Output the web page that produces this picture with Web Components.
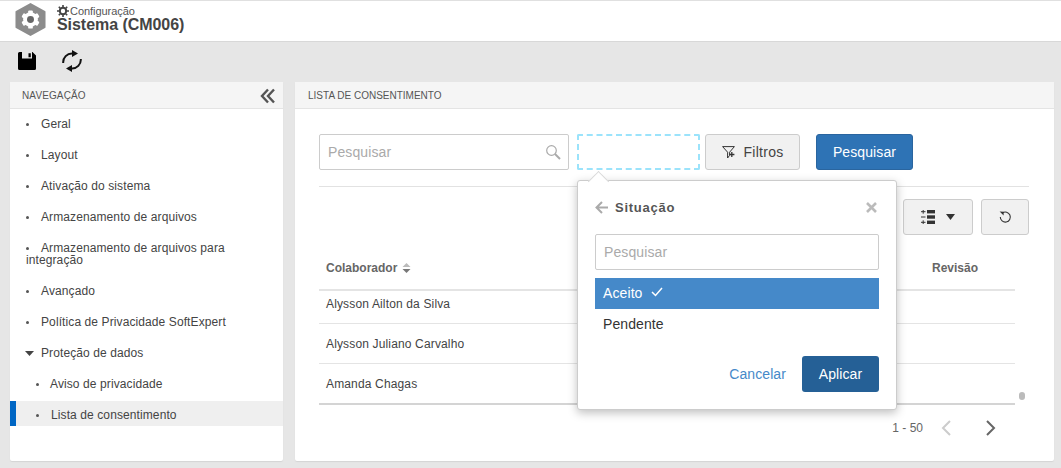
<!DOCTYPE html>
<html lang="pt">
<head>
<meta charset="utf-8">
<title>Sistema (CM006)</title>
<style>
  html, body { margin: 0; height: 100%; }
  body {
    background: #e6e6e6;
    font-family: "Liberation Sans", Arial, sans-serif;
    color: #444;
    overflow: hidden;
  }
  #work { display: flex; gap: 12px; padding: 0 7px 0 10px; height: 379px; }
</style>
</head>
<body>
<app-header></app-header>
<app-toolbar></app-toolbar>
<div id="work">
  <side-nav>
    <nav-item>Geral</nav-item>
    <nav-item>Layout</nav-item>
    <nav-item>Ativação do sistema</nav-item>
    <nav-item>Armazenamento de arquivos</nav-item>
    <nav-item wrap>Armazenamento de arquivos para integração</nav-item>
    <nav-item>Avançado</nav-item>
    <nav-item>Política de Privacidade SoftExpert</nav-item>
    <nav-item open>Proteção de dados</nav-item>
    <nav-item sub>Aviso de privacidade</nav-item>
    <nav-item sub active>Lista de consentimento</nav-item>
  </side-nav>
  <consent-list>
    <consent-row slot="rows">Alysson Ailton da Silva</consent-row>
    <consent-row slot="rows">Alysson Juliano Carvalho</consent-row>
    <consent-row slot="rows" last>Amanda Chagas</consent-row>
    <filter-popup slot="popup"></filter-popup>
  </consent-list>
</div>

<script>
const FONT = '"Liberation Sans", Arial, sans-serif';

class AppHeader extends HTMLElement {
  constructor() {
    super();
    this.attachShadow({mode:'open'}).innerHTML = `
      <style>
        :host { display: flex; align-items: flex-start; height: 40px; background: #fff; border-top: 1px solid #e0e0e0; border-bottom: 1px solid #d8d8d8; font-family: ${FONT}; }
        .logo { margin: 2px 0 0 15px; width: 31px; height: 33px; flex: none; }
        .txt { margin: 4px 0 0 11px; display: flex; flex-direction: column; }
        .crumb { display: flex; align-items: center; gap: 1px; font-size: 11px; line-height: 11px; color: #555; height: 11px; letter-spacing: -.05px; margin-top: 1px; }
        .crumb svg { margin-top: -1px; }
        .title { font-size: 16px; line-height: 18px; font-weight: bold; color: #444; letter-spacing: -.05px; margin-top: -1px; }
      </style>
      <svg class="logo" viewBox="0 0 32 34">
        <path d="M16 1 L30.5 9 V25 L16 33 L1.5 25 V9 Z" fill="#8c8c8c" stroke="#8c8c8c" stroke-linejoin="round" stroke-width="2"/>
        <g fill="#fff">
          <circle cx="16" cy="17" r="7.6"/>
          <rect x="13.6" y="7.6" width="4.8" height="18.8" rx="1"/>
          <rect x="13.6" y="7.6" width="4.8" height="18.8" rx="1" transform="rotate(60 16 17)"/>
          <rect x="13.6" y="7.6" width="4.8" height="18.8" rx="1" transform="rotate(120 16 17)"/>
        </g>
        <circle cx="16" cy="17" r="3.6" fill="#666"/>
      </svg>
      <div class="txt">
        <div class="crumb">
          <svg width="12" height="12" viewBox="0 0 12 12"><circle cx="6" cy="6" r="3.2" fill="none" stroke="#444" stroke-width="2"/><path d="M6 0v12M0 6h12M1.8 1.8l8.4 8.4M10.2 1.8l-8.4 8.4" stroke="#444" stroke-width="1.6" stroke-dasharray="2.2 7.6 2.2 0"/></svg>
          <span>Configuração</span>
        </div>
        <div class="title">Sistema (CM006)</div>
      </div>`;
  }
}

class AppToolbar extends HTMLElement {
  constructor() {
    super();
    this.attachShadow({mode:'open'}).innerHTML = `
      <style>
        :host { display: flex; align-items: center; height: 40px; padding: 0 0 2px 18px; gap: 26px; box-sizing: border-box; }
        svg { display: block; flex: none; }
      </style>
      <svg width="18" height="18" viewBox="0 0 18 18"><path fill-rule="evenodd" d="M1.5 0H14.5L18 3.5V16.5A1.5 1.5 0 0 1 16.5 18H1.5A1.5 1.5 0 0 1 0 16.5V1.5A1.5 1.5 0 0 1 1.5 0ZM4 0V6.5H14V0ZM10.5 1.2H12.8V5.2H10.5Z" fill="#000"/></svg>
      <svg width="20" height="22" viewBox="0 0 20 22" fill="none" stroke="#111" stroke-width="2"><path d="M1.2 13A8.8 8.8 0 0 1 10.5 3.5"/><path d="M18.8 9A8.8 8.8 0 0 1 9.5 18.5"/><path d="M10 0L16 3.5L10 7Z" fill="#111" stroke="none"/><path d="M10 15L4 18.5L10 22Z" fill="#111" stroke="none"/></svg>`;
  }
}

class SideNav extends HTMLElement {
  constructor() {
    super();
    this.attachShadow({mode:'open'}).innerHTML = `
      <style>
        :host { display: flex; flex-direction: column; width: 273px; flex: none; background: #fff; border-radius: 2px; box-shadow: 0 1px 1px #d4d4d4; font-family: ${FONT}; }
        .head { display: flex; align-items: center; justify-content: space-between; height: 27px; box-sizing: border-box; padding: 1px 8px 0 12px; background: #f5f5f5; border-bottom: 1px solid #e4e4e4; font-size: 10px; letter-spacing: .12px; color: #555; flex: none; }
        .list { display: flex; flex-direction: column; padding-top: 1px; }
      </style>
      <div class="head"><span>NAVEGAÇÃO</span>
        <svg width="15" height="16" viewBox="0 0 15 16" fill="none" stroke="#555" stroke-width="2.4"><path d="M8 1.5L2 8l6 6.5M14 1.5L8 8l6 6.5"/></svg>
      </div>
      <div class="list"><slot></slot></div>`;
  }
}

class NavItem extends HTMLElement {
  constructor() {
    super();
    const open = this.hasAttribute('open');
    const mark = open
      ? '<svg class="mk" width="9" height="5" viewBox="0 0 9 5"><path d="M0 0h9L4.5 5z" fill="#444"/></svg>'
      : '<i class="dot"></i>';
    this.attachShadow({mode:'open'}).innerHTML = `
      <style>
        :host { display: block; box-sizing: border-box; height: 31px; font-size: 12px; line-height: 12px; color: #444; letter-spacing: .1px; padding: 8px 8px 0 16px; position: relative; }
        :host([wrap]) { height: 43px; }
        :host([sub]) { padding-left: 26px; }
        :host([active]) { height: 25px; padding-top: 8px; background: #efefef; border-left: 6px solid #0066c4; padding-left: 20px; }
        .dot { display: inline-block; width: 3px; height: 3px; background: #555; border-radius: 50%; vertical-align: 2px; margin-right: 12px; }
        :host([sub]) .dot { margin-right: 11px; }
        :host([active]) .dot { margin-right: 12px; }
        .mk { margin: 0 7px 1px -1px; }
      </style>
      ${mark}<slot></slot>`;
  }
}

class ConsentRow extends HTMLElement {
  constructor() {
    super();
    this.attachShadow({mode:'open'}).innerHTML = `
      <style>
        :host { display: flex; align-items: center; box-sizing: border-box; height: 40px; padding: 0 0 0 7px; border-bottom: 1px solid #e4e4e4; font-size: 12px; color: #444; letter-spacing: .15px; }
        :host(:first-of-type) { height: 33px; align-items: flex-start; padding-top: 6px; }
        :host([last]) { border-bottom: 2px solid #d4d4d4; height: 41px; }
      </style>
      <slot></slot>`;
  }
}

class ConsentList extends HTMLElement {
  constructor() {
    super();
    this.attachShadow({mode:'open'}).innerHTML = `
      <style>
        :host { display: flex; flex-direction: column; flex: 1; min-width: 0; background: #fff; border-radius: 2px; box-shadow: 0 1px 1px #d4d4d4; font-family: ${FONT}; position: relative; }
        .head { height: 27px; flex: none; box-sizing: border-box; display: flex; align-items: center; padding: 1px 0 0 13px; background: #f5f5f5; border-bottom: 1px solid #e4e4e4; font-size: 10px; color: #555; }
        .body { padding: 25px 25px 0 24px; }
        .search { display: flex; height: 36px; padding-bottom: 16px; border-bottom: 1px solid #e2e2e2; }
        .inp { box-sizing: border-box; width: 250px; height: 36px; border: 1px solid #ccc; border-radius: 2px; display: flex; align-items: center; justify-content: space-between; padding: 0 7px 0 8px; font-size: 14px; color: #aaa; letter-spacing: .1px; }
        .dash { box-sizing: border-box; width: 123px; height: 36px; margin-left: 8px; border: 2px dashed #9be3fb; border-radius: 2px; }
        .btn { box-sizing: border-box; height: 36px; display: flex; align-items: center; justify-content: center; border: 1px solid #ccc; border-radius: 3px; background: #f1f1f1; color: #444; font-size: 14px; letter-spacing: .3px; }
        .filt { width: 95px; margin-left: 5px; gap: 8px; padding-left: 1px; }
        .go { width: 97px; margin-left: 16px; background: #2e73b5; border-color: #2a659f; color: #fff; letter-spacing: .1px; }
        .tools { display: flex; justify-content: flex-end; gap: 8px; margin-top: 12px; }
        .cfg { width: 70px; gap: 11px; }
        .ref { width: 48px; }
        .table { width: 696px; margin-top: 20px; }
        .th { display: flex; height: 36px; box-sizing: border-box; border-bottom: 2px solid #e4e4e4; font-size: 12px; font-weight: bold; color: #666; padding: 6px 0 0 7px; line-height: 14px; }
        .th .col { display: flex; gap: 5px; }
        .th .rev { margin-left: auto; margin-right: 37px; }
        .th svg { margin-top: 2px; }
        .foot { display: flex; align-items: center; justify-content: flex-end; height: 46px; font-size: 12px; color: #666; }
        .foot svg { display: block; }
        .dotbar { position: absolute; left: 724px; top: 310px; width: 6px; height: 8px; border-radius: 3px; background: #bbb; }
      </style>
      <div class="head">LISTA DE CONSENTIMENTO</div>
      <div class="body">
        <div class="search">
          <div class="inp"><span>Pesquisar</span>
            <svg width="16" height="16" viewBox="0 0 16 16" fill="none" stroke="#aaa"><circle cx="6.5" cy="6.5" r="4.8" stroke-width="1.2"/><path d="M10 10l5 5" stroke-width="2"/></svg>
          </div>
          <div class="dash"></div>
          <div class="btn filt">
            <svg width="13" height="13" viewBox="0 0 13 13" fill="none" stroke="#333"><path d="M.6.6h11.8L7.6 6.2V9.4L5.6 12V6.2Z" stroke-width="1"/><path d="M9.8 6v5M7.4 8.5h5" stroke-width="1.3"/></svg>
            <span>Filtros</span>
          </div>
          <div class="btn go">Pesquisar</div>
        </div>
        <div class="tools">
          <div class="btn cfg">
            <svg width="14" height="14" viewBox="0 0 14 14" fill="#333"><rect x="6" y="0" width="8" height="3.4"/><rect x="6" y="5.3" width="8" height="3.4"/><rect x="6" y="10.6" width="8" height="3.4"/><path d="M0 1.7h4.5M2.2-.3v4M0 7h4.5M0 12.3h4.5M2.2 10.3v4" stroke="#333" fill="none"/></svg>
            <svg width="9" height="6" viewBox="0 0 9 6"><path d="M0 0h9L4.5 6z" fill="#333"/></svg>
          </div>
          <div class="btn ref">
            <svg width="13" height="13" viewBox="0 0 13 13" fill="none" stroke="#333" stroke-width="1.1"><path d="M3.4 2A5 5 0 1 1 1.3 6"/><path d="M.6.6L4.6.8V4.4Z" fill="#333" stroke="none"/></svg>
          </div>
        </div>
        <div class="table">
          <div class="th">
            <div class="col">Colaborador
              <svg width="9" height="10" viewBox="0 0 9 10"><path d="M4.5 0L8.5 4H.5Z" fill="#bbb"/><path d="M.5 6H8.5L4.5 10Z" fill="#777"/></svg>
            </div>
            <div class="rev">Revisão</div>
          </div>
          <slot name="rows"></slot>
        </div>
        <div class="foot">
          <span>1 - 50</span>
          <svg style="margin-left:17px" width="12" height="16" viewBox="0 0 12 16" fill="none" stroke="#ccc" stroke-width="2"><path d="M10 1L3 8l7 7"/></svg>
          <svg style="margin-left:33px;margin-right:32px" width="12" height="16" viewBox="0 0 12 16" fill="none" stroke="#666" stroke-width="2"><path d="M2 1l7 7-7 7"/></svg>
        </div>
      </div>
      <div class="dotbar"></div>
      <slot name="popup"></slot>`;
  }
}

class FilterPopup extends HTMLElement {
  constructor() {
    super();
    this.attachShadow({mode:'open'}).innerHTML = `
      <style>
        :host { position: absolute; left: 282px; top: 98px; width: 320px; height: 230px; box-sizing: border-box; background: #fff; border: 1px solid #ccc; border-radius: 3px; box-shadow: 0 3px 10px rgba(0,0,0,.25); padding: 0 17px; display: flex; flex-direction: column; }
        .arrow { position: absolute; left: 13px; top: -7px; width: 14px; height: 14px; background: #fff; border: 1px solid #d8d8d8; border-right: 0; border-bottom: 0; transform: rotate(45deg); }
        .title { display: flex; align-items: center; height: 53px; flex: none; font-size: 13px; font-weight: bold; color: #555; letter-spacing: .75px; gap: 7px; position: relative; }
        .x { margin-left: auto; margin-right: 2px; }
        .inp { box-sizing: border-box; height: 36px; flex: none; border: 1px solid #ccc; border-radius: 2px; display: flex; align-items: center; padding-left: 8px; font-size: 14px; color: #aaa; letter-spacing: .1px; }
        .opt { box-sizing: border-box; height: 31px; flex: none; display: flex; align-items: center; padding: 0 0 1px 8px; gap: 6px; font-size: 14px; letter-spacing: .1px; color: #333; }
        .sel { margin-top: 8px; background: #4589c9; color: #fff; }
        .acts { display: flex; justify-content: flex-end; align-items: center; margin-top: 16px; }
        .cancel { color: #4589c9; font-size: 14px; letter-spacing: .1px; margin-right: 16px; }
        .ok { width: 77px; height: 36px; background: #256096; border-radius: 3px; color: #fff; font-size: 14px; letter-spacing: .1px; display: flex; align-items: center; justify-content: center; }
      </style>
      <div class="arrow"></div>
      <div class="title">
        <svg width="13" height="13" viewBox="0 0 13 13" fill="none" stroke="#aaa" stroke-width="2"><path d="M7 1L1.5 6.5 7 12M2 6.5h11"/></svg>
        <span>Situação</span>
        <svg class="x" width="11" height="11" viewBox="0 0 11 11" stroke="#bbb" stroke-width="2.6"><path d="M1 1l9 9M10 1l-9 9"/></svg>
      </div>
      <div class="inp">Pesquisar</div>
      <div class="opt sel"><span>Aceito</span>
        <svg width="12" height="10" viewBox="0 0 12 10" fill="none" stroke="#fff" stroke-width="1.5" style="margin:0 0 3px 2px"><path d="M1 5l3.5 3.5L11 1"/></svg>
      </div>
      <div class="opt">Pendente</div>
      <div class="acts"><span class="cancel">Cancelar</span><div class="ok">Aplicar</div></div>`;
  }
}

customElements.define('app-header', AppHeader);
customElements.define('app-toolbar', AppToolbar);
customElements.define('side-nav', SideNav);
customElements.define('nav-item', NavItem);
customElements.define('consent-row', ConsentRow);
customElements.define('consent-list', ConsentList);
customElements.define('filter-popup', FilterPopup);
</script>
</body>
</html>
